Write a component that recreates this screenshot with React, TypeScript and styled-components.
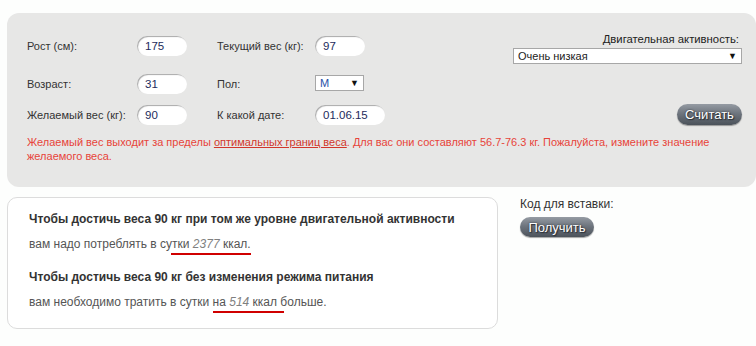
import React from "react";
import styled, { createGlobalStyle } from "styled-components";

const Global = createGlobalStyle`
  html, body { margin: 0; padding: 0; background: #fdfefd; }
  body { font-family: "Liberation Sans", Arial, sans-serif; font-size: 12px; color: #333; }
  * { box-sizing: border-box; }
`;

const Page = styled.div`
  width: 756px;
  padding-top: 13px;
`;

const Panel = styled.div`
  margin-left: 7px;
  background: #e7e7e6;
  border-radius: 12px;
  padding: 23px 14px 24px 20px;
  font-size: 11px;
`;

const FormGrid = styled.div`
  display: grid;
  grid-template-columns: 110px 80px 98px 198px 229px;
  grid-template-rows: 38px 31px 20px;
  align-items: start;
`;

const Label = styled.div`
  height: 20px;
  line-height: 20px;
  color: #333;
  white-space: nowrap;
`;

const Pill = styled.div<{ $w: number }>`
  width: ${(p) => p.$w}px;
  height: 20px;
  line-height: 20px;
  border-radius: 10px;
  background: #fff;
  box-shadow: inset 1px 1px 1px #a9a9a9;
  padding-left: 8px;
  color: #1d2b5c;
  font-size: 11.5px;
`;

const Select = styled.div<{ $w: number }>`
  width: ${(p) => p.$w}px;
  height: 16px;
  line-height: 14px;
  background: #fff;
  border: 1px solid #a7a7a7;
  padding: 0 4px;
  display: flex;
  justify-content: space-between;
  align-items: center;
  font-size: 11px;
`;

const SelectText = styled.span<{ $blue?: boolean }>`
  color: ${(p) => (p.$blue ? "#2850a8" : "#222")};
`;

const Arrow = styled.span`
  font-size: 9px;
  color: #111;
`;

const SexSelect = styled(Select)`
  margin-top: 1px;
`;

const Activity = styled.div`
  grid-column: 5;
  grid-row: 1 / span 2;
  margin-top: -3px;
  display: flex;
  flex-direction: column;
  align-items: flex-end;
  gap: 2px;
`;

const ActivityLabel = styled.div`
  line-height: 13px;
  padding-right: 3px;
  color: #222;
  font-size: 11.3px;
`;

const DarkButton = styled.button<{ $w: number; $h: number }>`
  width: ${(p) => p.$w}px;
  height: ${(p) => p.$h}px;
  border: none;
  border-radius: ${(p) => p.$h / 2}px;
  background: linear-gradient(#959ba3 0%, #6e757e 45%, #4b525a 100%);
  box-shadow: 0 1px 1px rgba(0, 0, 0, 0.35);
  color: #fff;
  font-family: "Liberation Sans", Arial, sans-serif;
  font-size: 13px;
  text-shadow: 0 0 2px #2a2f35, 1px 1px 1px #2a2f35;
  padding: 0;
  cursor: pointer;
`;

const CalcCell = styled.div`
  grid-column: 5;
  grid-row: 3;
  justify-self: end;
  margin-top: -1px;
`;

const ErrorText = styled.p`
  margin: 10px 0 0;
  color: #e8443a;
  line-height: 14px;
`;

const ErrLink = styled.a`
  color: #d2372c;
  text-decoration: underline;
`;

const Bottom = styled.div`
  display: flex;
  align-items: flex-start;
  gap: 22px;
  margin: 10px 0 0 7px;
`;

const ResultBox = styled.div`
  width: 491px;
  height: 132px;
  border: 1px solid #dcdcdc;
  border-radius: 10px;
  background: #fff;
  padding: 14px 0 0 21px;
`;

const Bold = styled.div<{ $mt?: number }>`
  font-weight: bold;
  color: #333;
  line-height: 15px;
  margin-top: ${(p) => p.$mt ?? 0}px;
`;

const Normal = styled.div`
  color: #555;
  line-height: 15px;
  margin-top: 10px;
`;

const Num = styled.i`
  color: #808080;
`;

const Marked = styled.span<{ $l: number; $r: number }>`
  position: relative;
  &::after {
    content: "";
    position: absolute;
    left: ${(p) => p.$l}px;
    right: ${(p) => p.$r}px;
    bottom: -4px;
    height: 2px;
    background: #d00000;
  }
`;

const EmbedCol = styled.div`
  display: flex;
  flex-direction: column;
  align-items: flex-start;
  gap: 6px;
`;

const EmbedLabel = styled.div`
  line-height: 14px;
  color: #333;
`;

export default function App() {
  return (
    <Page>
      <Global />
      <Panel>
        <FormGrid>
          <Label>Рост (см):</Label>
          <Pill $w={50}>175</Pill>
          <Label>Текущий вес (кг):</Label>
          <Pill $w={50}>97</Pill>
          <Activity>
            <ActivityLabel>Двигательная активность:</ActivityLabel>
            <Select $w={229}>
              <SelectText>Очень низкая</SelectText>
              <Arrow>▼</Arrow>
            </Select>
          </Activity>

          <Label>Возраст:</Label>
          <Pill $w={50}>31</Pill>
          <Label>Пол:</Label>
          <SexSelect $w={49}>
            <SelectText $blue>М</SelectText>
            <Arrow>▼</Arrow>
          </SexSelect>

          <Label>Желаемый вес (кг):</Label>
          <Pill $w={50}>90</Pill>
          <Label>К какой дате:</Label>
          <Pill $w={70}>01.06.15</Pill>
          <CalcCell>
            <DarkButton $w={65} $h={21}>Считать</DarkButton>
          </CalcCell>
        </FormGrid>
        <ErrorText>
          Желаемый вес выходит за пределы <ErrLink href="#">оптимальных границ веса</ErrLink>. Для вас они
          составляют 56.7-76.3 кг. Пожалуйста, измените значение
          <br />
          желаемого веса.
        </ErrorText>
      </Panel>
      <Bottom>
        <ResultBox>
          <Bold>Чтобы достичь веса 90 кг при том же уровне двигательной активности</Bold>
          <Normal>
            вам надо потреблять в{" "}
            <Marked $l={11} $r={0}>
              сутки <Num>2377</Num> ккал.
            </Marked>
          </Normal>
          <Bold $mt={18}>Чтобы достичь веса 90 кг без изменения режима питания</Bold>
          <Normal>
            вам необходимо тратить в сутки{" "}
            <Marked $l={0} $r={-7}>
              на <Num>514</Num> ккал
            </Marked>{" "}
            больше.
          </Normal>
        </ResultBox>
        <EmbedCol>
          <EmbedLabel>Код для вставки:</EmbedLabel>
          <DarkButton $w={74} $h={20}>Получить</DarkButton>
        </EmbedCol>
      </Bottom>
    </Page>
  );
}
